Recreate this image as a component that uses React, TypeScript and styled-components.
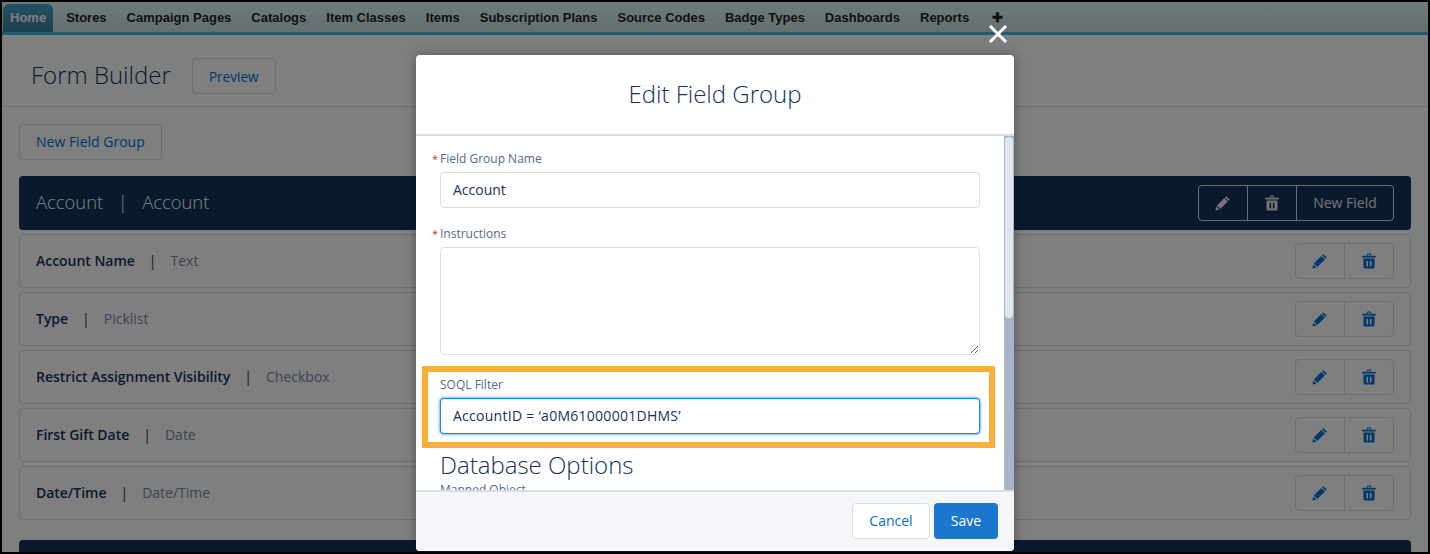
import React from 'react';
import styled, { createGlobalStyle } from 'styled-components';

const sans = '"Open Sans", "Noto Sans", sans-serif';

const GlobalStyle = createGlobalStyle`
  html, body {
    margin: 0;
    padding: 0;
    background: #000;
  }
  * {
    box-sizing: border-box;
  }
`;

const Frame = styled.div`
  position: relative;
  width: 1430px;
  height: 554px;
  border: 2px solid #000;
  overflow: hidden;
  background: #fdfefe;
  font-family: ${sans};
  color: #16325c;
`;

const Nav = styled.nav`
  display: flex;
  align-items: flex-end;
  height: 33px;
  padding-left: 1px;
  border-bottom: 3px solid #4cb4e0;
  background: linear-gradient(#def4f8, #caddE2);
`;

const NavTab = styled.a<{ $active?: boolean }>`
  display: block;
  height: 28px;
  padding: 0 ${(p) => (p.$active ? '7px' : '10px')};
  margin-right: ${(p) => (p.$active ? '3px' : '0')};
  border-radius: 6px 6px 0 0;
  font: bold 13px/27px "Liberation Sans", Arial, sans-serif;
  color: ${(p) => (p.$active ? '#fff' : '#222')};
  background: ${(p) => (p.$active ? 'linear-gradient(#4aa4c4, #347ea0)' : 'none')};
`;

const PlusTab = styled(NavTab)`
  padding-left: 13px;
`;

const PageHeader = styled.header`
  display: flex;
  align-items: center;
  gap: 21px;
  height: 72px;
  padding: 9px 0 0 29px;
  border-bottom: 1px solid #d8dde6;
`;

const PageTitle = styled.h1`
  margin: 0 0 2px;
  font-size: 24px;
  font-weight: 300;
  color: #16325c;
`;

const OutlineButton = styled.button`
  height: 36px;
  padding: 0 16px;
  background: #fff;
  border: 1px solid #d8dde6;
  border-radius: 4px;
  font: 14px ${sans};
  color: #0070d2;
`;

const PreviewButton = styled(OutlineButton)`
  width: 84px;
  margin-top: 2px;
  padding: 0;
  font-size: 13.6px;
`;

const NewGroupButton = styled(OutlineButton)`
  padding-bottom: 2px;
`;

const Body = styled.main`
  padding: 17px 17px 0;
`;

const GroupBar = styled.div`
  display: flex;
  align-items: center;
  justify-content: space-between;
  height: 54px;
  margin-top: 16px;
  padding: 0 17px;
  border-radius: 4px;
  background: #16325c;
  color: #fff;
  font-size: 18.4px;
  font-weight: 300;
`;

const BarTitle = styled.div`
  display: flex;
  gap: 14.5px;
  padding-bottom: 4px;
`;

const FieldRow = styled.div`
  display: flex;
  align-items: center;
  justify-content: space-between;
  height: 54px;
  margin-top: 4px;
  padding: 0 16px;
  background: #fff;
  border: 1px solid #d8dde6;
  border-radius: 4px;
  font-size: 14px;
`;

const FieldText = styled.div`
  display: flex;
  gap: 14px;
  padding-bottom: 2px;
`;

const FieldName = styled.span`
  font-weight: 600;
  letter-spacing: -0.03px;
`;

const FieldType = styled.span`
  color: #7a88a6;
`;

const ButtonGroup = styled.div<{ $dark?: boolean }>`
  display: flex;
  height: 36px;
  border: 1px solid #d8dde6;
  border-radius: 4px;
  color: ${(p) => (p.$dark ? '#e4e8ee' : '#0070d2')};
  background: ${(p) => (p.$dark ? 'none' : '#fff')};
`;

const GroupCell = styled.div<{ $wide?: boolean }>`
  display: flex;
  align-items: center;
  justify-content: center;
  width: ${(p) => (p.$wide ? '97px' : '49px')};
  padding-bottom: ${(p) => (p.$wide ? '2px' : '0')};
  font-size: 14px;
  font-weight: 500;
  &:first-child {
    width: 48px;
  }
  & + & {
    border-left: 1px solid #d8dde6;
  }
`;

const LastGroupBar = styled(GroupBar)`
  margin-top: 20px;
`;

const Scrim = styled.div`
  position: absolute;
  inset: 0;
  display: flex;
  justify-content: center;
  padding-top: 53px;
  background: rgba(0, 0, 0, 0.5);
`;

const Modal = styled.section`
  position: relative;
  display: flex;
  flex-direction: column;
  width: 598px;
  height: 496px;
  background: #fff;
  border-radius: 4px;
  box-shadow: 0 0 12px rgba(0, 0, 0, 0.35);
`;

const CloseButton = styled.div`
  position: absolute;
  top: -31px;
  right: 6px;
  width: 20px;
  height: 20px;
  color: #fff;
`;

const ModalHeader = styled.header`
  display: flex;
  align-items: center;
  justify-content: center;
  height: 81px;
  padding-bottom: 2px;
  border-bottom: 2px solid #d8dde6;
`;

const ModalTitle = styled.h2`
  margin: 0;
  font-size: 24px;
  font-weight: 300;
  color: #16325c;
`;

const ModalBody = styled.div`
  display: flex;
  flex: 1;
  min-height: 0;
  overflow: hidden;
`;

const FormArea = styled.div`
  flex: 1;
  min-width: 0;
  padding: 15px 9px 0 6px;
  overflow: hidden;
`;

const ScrollTrack = styled.div`
  flex: none;
  width: 10px;
  background: #a9b5c5;
`;

const ScrollThumb = styled.div`
  height: 181px;
  margin: 1px 0 0 1px;
  width: 8px;
  border-radius: 4px;
  background: #e0e5ee;
`;

const Field = styled.div`
  padding: 0 15px 0 18px;
  margin-bottom: 18px;
`;

const HighlightField = styled.div`
  height: 82px;
  margin-top: -7px;
  padding: 5px 9px 0 12px;
  border: 6px solid #fbae36;
`;

const Label = styled.label`
  position: relative;
  display: block;
  height: 21px;
  font-size: 12px;
  line-height: 16px;
  color: #54698d;
`;

const Required = styled.span`
  position: absolute;
  left: -8px;
  font-size: 11px;
  color: #c23934;
`;

const TextInput = styled.input<{ $focus?: boolean }>`
  display: block;
  width: 100%;
  height: 36px;
  padding: 0 12px 2px;
  border: 1px solid ${(p) => (p.$focus ? '#1589ee' : '#d8dde6')};
  border-radius: 4px;
  outline: none;
  box-shadow: ${(p) => (p.$focus ? '0 0 3px #0070d2' : 'none')};
  font: 14px ${sans};
  letter-spacing: ${(p) => (p.$focus ? '0.27px' : '0')};
  color: #16325c;
  background: #fff;
`;

const TextArea = styled.textarea`
  display: block;
  width: 100%;
  height: 108px;
  padding: 8px 12px;
  border: 1px solid #d8dde6;
  border-radius: 4px;
  outline: none;
  font: 14px ${sans};
`;

const SectionTitle = styled.h3`
  margin: 0 0 0 18px;
  font-size: 24px;
  font-weight: 300;
  line-height: 33px;
  color: #16325c;
`;

const ClippedLabel = styled(Label)`
  margin: 0 0 0 18px;
  padding-top: 1px;
`;

const ModalFooter = styled.footer`
  display: flex;
  align-items: center;
  justify-content: flex-end;
  gap: 4px;
  height: 61px;
  padding: 0 16px 2px;
  background: #f4f6f9;
  border-top: 2px solid #d8dde6;
  border-radius: 0 0 4px 4px;
`;

const FooterButton = styled(OutlineButton)`
  width: 78px;
  padding: 0;
`;

const SaveButton = styled.button`
  width: 64px;
  height: 36px;
  background: #1b76cf;
  border: 0;
  border-radius: 4px;
  font: 500 14px ${sans};
  color: #fff;
`;

const PencilIcon = () => (
  <svg width="16" height="16" viewBox="0 0 16 16" fill="currentColor">
    <path d="M11.2 1.2 14.8 4.6 13.6 5.8 10 2.4Z" />
    <path d="M9.3 3.1 12.9 6.5 5.4 14 1.8 10.6Z" />
    <path d="M1.2 11.5 4.5 14.7 .4 15.6Z" />
  </svg>
);

const TrashIcon = () => (
  <svg width="16" height="16" viewBox="0 0 16 16" fill="currentColor">
    <path d="M5.8 2.4V1.6C5.8.9 6.3.4 7 .4h2c.7 0 1.2.5 1.2 1.2v.8H9.1v-.6c0-.2-.1-.3-.3-.3H7.2c-.2 0-.3.1-.3.3v.6Z" />
    <rect x="1.2" y="2.7" width="13.6" height="1.9" rx=".5" />
    <path
      fillRule="evenodd"
      d="M2.5 5.6h11V14c0 .9-.7 1.6-1.6 1.6H4.1c-.9 0-1.6-.7-1.6-1.6ZM5.5 7.8v5.6h1.6V7.8ZM8.9 7.8v5.6h1.6V7.8Z"
    />
  </svg>
);

const CloseIcon = () => (
  <svg width="20" height="20" viewBox="0 0 20 20" fill="none" stroke="currentColor" strokeWidth="3">
    <path d="M2 2 18 18M18 2 2 18" />
  </svg>
);

const tabs = [
  'Stores',
  'Campaign Pages',
  'Catalogs',
  'Item Classes',
  'Items',
  'Subscription Plans',
  'Source Codes',
  'Badge Types',
  'Dashboards',
  'Reports',
];

const fields = [
  ['Account Name', 'Text'],
  ['Type', 'Picklist'],
  ['Restrict Assignment Visibility', 'Checkbox'],
  ['First Gift Date', 'Date'],
  ['Date/Time', 'Date/Time'],
];

export default function App() {
  return (
    <Frame>
      <GlobalStyle />
      <Nav>
        <NavTab $active>Home</NavTab>
        {tabs.map((tab) => (
          <NavTab key={tab}>{tab}</NavTab>
        ))}
        <PlusTab>✚</PlusTab>
      </Nav>
      <PageHeader>
        <PageTitle>Form Builder</PageTitle>
        <PreviewButton>Preview</PreviewButton>
      </PageHeader>
      <Body>
        <NewGroupButton>New Field Group</NewGroupButton>
        <GroupBar>
          <BarTitle>
            <span>Account</span>
            <span>|</span>
            <span>Account</span>
          </BarTitle>
          <ButtonGroup $dark>
            <GroupCell><PencilIcon /></GroupCell>
            <GroupCell><TrashIcon /></GroupCell>
            <GroupCell $wide>New Field</GroupCell>
          </ButtonGroup>
        </GroupBar>
        {fields.map(([name, type]) => (
          <FieldRow key={name}>
            <FieldText>
              <FieldName>{name}</FieldName>
              <span>|</span>
              <FieldType>{type}</FieldType>
            </FieldText>
            <ButtonGroup>
              <GroupCell><PencilIcon /></GroupCell>
              <GroupCell><TrashIcon /></GroupCell>
            </ButtonGroup>
          </FieldRow>
        ))}
        <LastGroupBar />
      </Body>
      <Scrim>
        <Modal>
          <CloseButton><CloseIcon /></CloseButton>
          <ModalHeader>
            <ModalTitle>Edit Field Group</ModalTitle>
          </ModalHeader>
          <ModalBody>
            <FormArea>
              <Field>
                <Label><Required>*</Required>Field Group Name</Label>
                <TextInput readOnly value="Account" />
              </Field>
              <Field>
                <Label><Required>*</Required>Instructions</Label>
                <TextArea readOnly />
              </Field>
              <HighlightField>
                <Label>SOQL Filter</Label>
                <TextInput $focus readOnly value="AccountID = ‘a0M61000001DHMS’" />
              </HighlightField>
              <SectionTitle>Database Options</SectionTitle>
              <ClippedLabel>Mapped Object</ClippedLabel>
            </FormArea>
            <ScrollTrack>
              <ScrollThumb />
            </ScrollTrack>
          </ModalBody>
          <ModalFooter>
            <FooterButton>Cancel</FooterButton>
            <SaveButton>Save</SaveButton>
          </ModalFooter>
        </Modal>
      </Scrim>
    </Frame>
  );
}
